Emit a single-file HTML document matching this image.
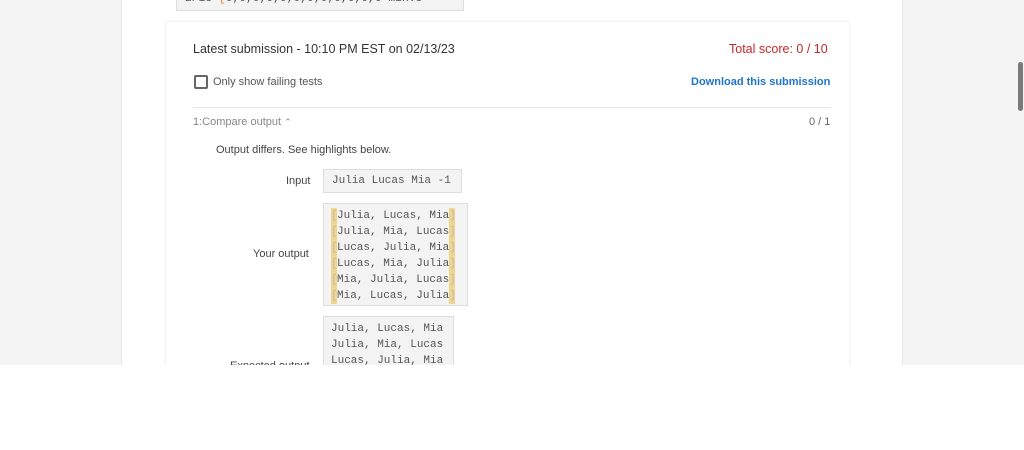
<!DOCTYPE html>
<html><head><style>
*{margin:0;padding:0;box-sizing:border-box}
body{width:1024px;height:450px;background:#fff;font-family:"Liberation Sans",sans-serif;position:relative;overflow:hidden}
.top{position:absolute;left:0;top:0;width:1024px;height:365px;background:#f4f4f4;overflow:hidden}
.panel{position:absolute;left:121px;top:0;width:782px;height:365px;background:#fff;border-left:1px solid #e6e6e6;border-right:1px solid #e6e6e6}
.code0{position:absolute;left:176px;top:-12px;width:288px;height:23px;background:#f3f3f3;border:1px solid #ddd;font-family:"Liberation Mono",monospace;font-size:11.3px;color:#555;padding:4px 8px;white-space:nowrap;overflow:hidden}
.card{position:absolute;left:166px;top:22px;width:683px;height:360px;background:#fff;box-shadow:0 0 3px rgba(0,0,0,.12)}
.t{position:absolute;font-size:12px;color:#333;white-space:nowrap}
.mono{font-family:"Liberation Mono",monospace;font-size:11px;color:#555;white-space:pre}
.box{position:absolute;background:#f3f3f3;border:1px solid #ddd}
.hl{background:#f0d68a;display:inline-block;height:16px;width:6px;color:#bbb;overflow:hidden;vertical-align:top}
.sb{position:absolute;left:1018px;top:62px;width:5px;height:49px;background:#7a7a7a;border-radius:3px}
</style></head><body>
<div class="top">
<div class="panel"></div>
<div class="code0">2/15 <span style="color:#e8882a">[</span>0,0,0,0,0,0,0,0,0,0,0,0 min.5</div>
<div class="card"></div>
<div class="t" style="left:193px;top:42px;font-size:12.5px">Latest submission - 10:10 PM EST on 02/13/23</div>
<div class="t" style="left:729px;top:42px;font-size:12.5px;color:#c62828">Total score: 0 / 10</div>
<div style="position:absolute;left:194px;top:75px;width:14px;height:14px;border:2px solid #666;border-radius:2px"></div>
<div class="t" style="left:213px;top:76px;font-size:11px;color:#555">Only show failing tests</div>
<div class="t" style="left:691px;top:76px;font-size:11px;color:#1e74c9;font-weight:bold">Download this submission</div>
<div style="position:absolute;left:193px;top:107px;width:638px;height:1px;background:#e6e6e6"></div>
<div class="t" style="left:193px;top:116px;font-size:11px;color:#888">1:Compare output <span style="font-size:9px">&#8963;</span></div>
<div class="t" style="left:809px;top:116px;font-size:11px;color:#666">0 / 1</div>
<div class="t" style="left:216px;top:144px;font-size:11px;color:#444">Output differs. See highlights below.</div>
<div class="t" style="left:286px;top:175px;font-size:11px;color:#444">Input</div>
<div class="box mono" style="left:323px;top:169px;width:139px;height:24px;padding:5px 8px">Julia Lucas Mia -1</div>
<div class="t" style="left:253px;top:248px;font-size:11px;color:#444">Your output</div>
<div class="box mono" style="left:323px;top:203px;width:145px;height:103px;padding:4px 7px 0 7px;line-height:16px"><span class="hl">[</span>Julia, Lucas, Mia<span class="hl">]</span>
<span class="hl">[</span>Julia, Mia, Lucas<span class="hl">]</span>
<span class="hl">[</span>Lucas, Julia, Mia<span class="hl">]</span>
<span class="hl">[</span>Lucas, Mia, Julia<span class="hl">]</span>
<span class="hl">[</span>Mia, Julia, Lucas<span class="hl">]</span>
<span class="hl">[</span>Mia, Lucas, Julia<span class="hl">]</span></div>
<div class="box mono" style="left:323px;top:316px;width:131px;height:80px;padding:4px 7px 0 7px;line-height:16px">Julia, Lucas, Mia
Julia, Mia, Lucas
Lucas, Julia, Mia</div>
<div class="t" style="left:230px;top:360px;font-size:11px;color:#444">Expected output</div>
<div class="sb"></div>
</div>
</body></html>
